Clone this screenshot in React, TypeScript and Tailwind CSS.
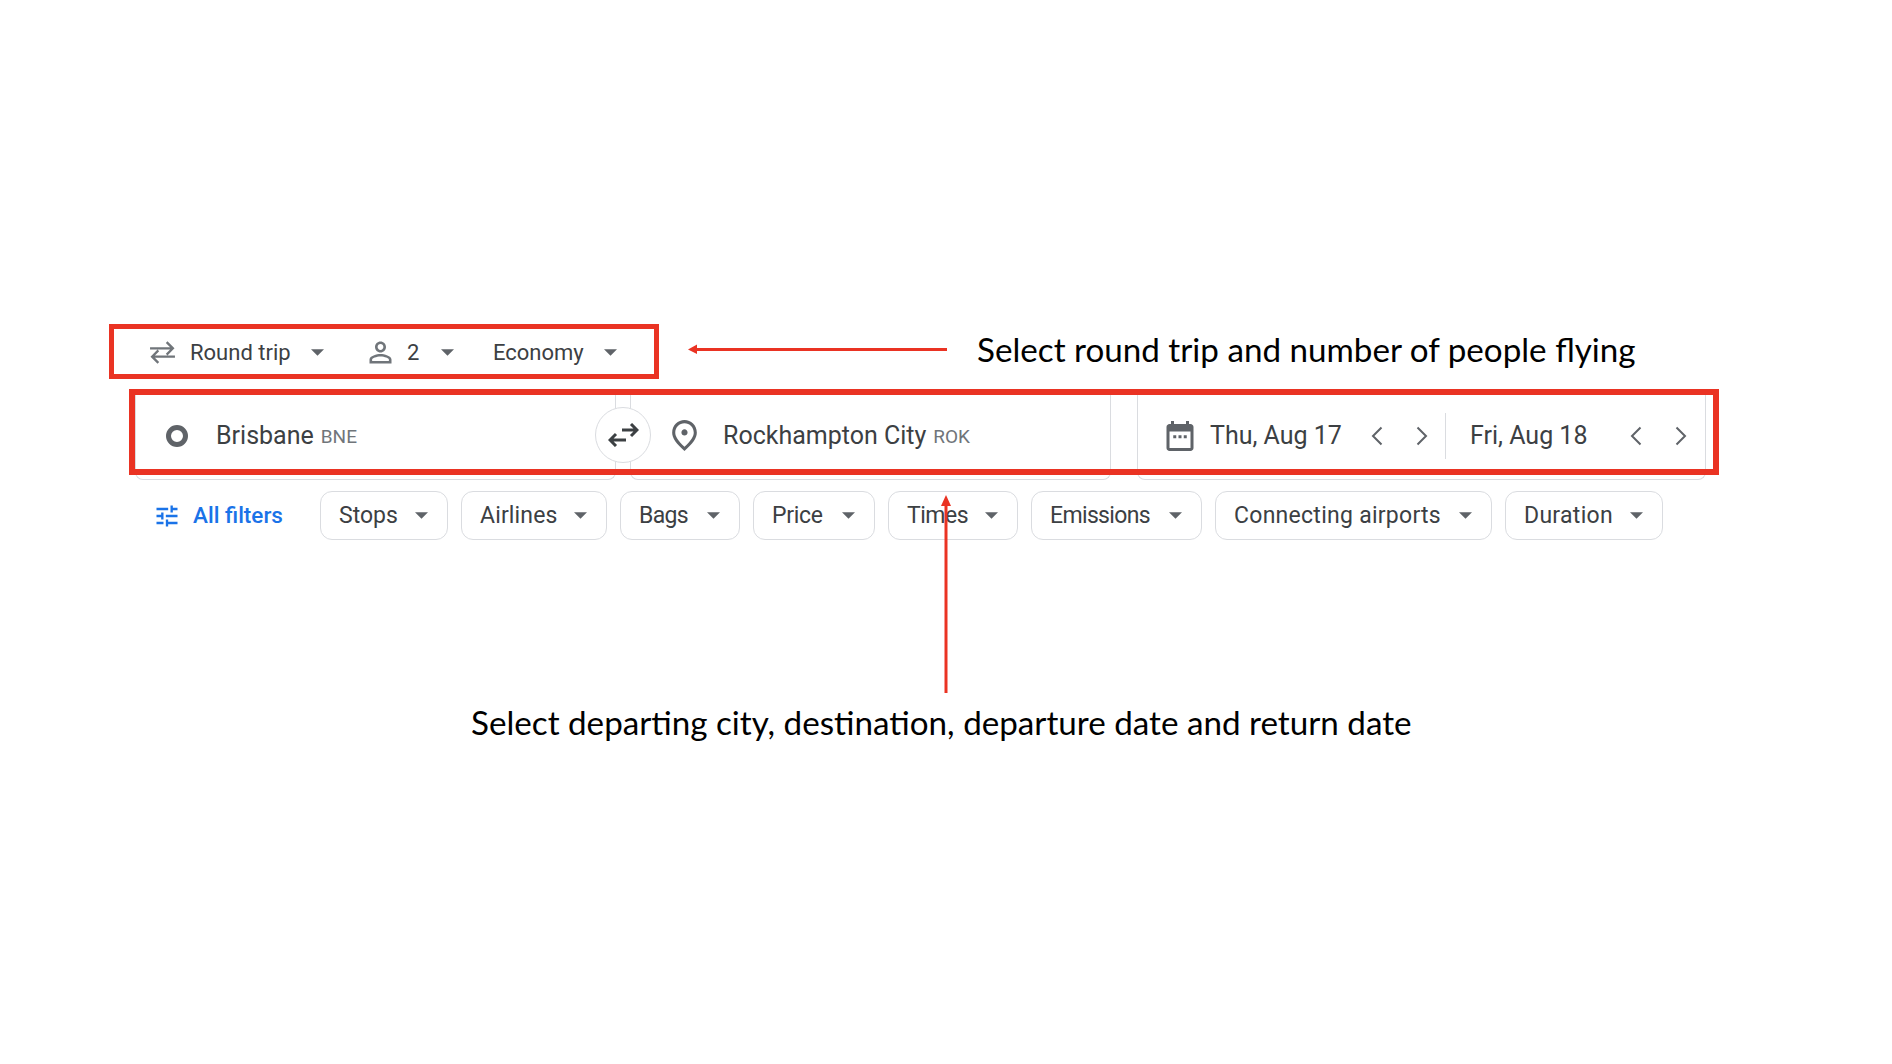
const chips = [
  { label: 'Stops', width: 'w-[128px]', tracking: '' },
  { label: 'Airlines', width: 'w-[146px]', tracking: 'tracking-[0.15px]' },
  { label: 'Bags', width: 'w-[120px]', tracking: 'tracking-[-0.7px]' },
  { label: 'Price', width: 'w-[122px]', tracking: 'tracking-[-0.3px]' },
  { label: 'Times', width: 'w-[130px]', tracking: 'tracking-[-0.5px]' },
  { label: 'Emissions', width: 'w-[171px]', tracking: 'tracking-[-0.65px]' },
  { label: 'Connecting airports', width: 'w-[277px]', tracking: 'tracking-[0.27px]' },
  { label: 'Duration', width: 'w-[158px]', tracking: 'tracking-[0.3px]' },
];

function Caret({ className = '' }: { className?: string }) {
  return (
    <svg viewBox="0 0 14 7" className={`w-[13px] h-[7px] shrink-0 ${className}`} fill="#5f6368">
      <path d="M0 0h14L7 7z" />
    </svg>
  );
}

function Chevron({ dir }: { dir: 'left' | 'right' }) {
  return (
    <svg viewBox="0 0 14 20" className="w-[14px] h-[20px] shrink-0" fill="none" stroke="#5f6368" strokeWidth="2">
      <path d={dir === 'left' ? 'M11.5 1.5 3 10l8.5 8.5' : 'M2.5 1.5 11 10l-8.5 8.5'} />
    </svg>
  );
}

function DateBox({ label, textWidth, className = '' }: { label: string; textWidth: string; className?: string }) {
  return (
    <div className={`flex items-center ${className}`}>
      <span className={`text-[25px] text-[#3c4043] ${textWidth}`}>{label}</span>
      <Chevron dir="left" />
      <span className="w-[31px]" />
      <Chevron dir="right" />
    </div>
  );
}

export default function App() {
  return (
    <div className="relative w-[1892px] h-[1064px] bg-white overflow-hidden font-['Roboto',sans-serif]">
      <div className="pt-[325px]">
        {/* Trip options */}
        <div className="flex items-center h-[54px] pl-[149px] text-[22px] text-[#3c4043]">
          <svg viewBox="0 0 26 24" className="w-[27px] h-[25px]" fill="none" stroke="#70757a" strokeWidth="2.2">
            <path d="M1 8h22M17 2l6 6-6 6M25 16H3M9 10l-6 6 6 6" />
          </svg>
          <span className="ml-[14px] w-[108px]">Round trip</span>
          <Caret className="ml-[13px]" />
          <svg viewBox="0 0 24 24" className="ml-[40px] w-[33px] h-[33px]" fill="#70757a">
            <path d="M12 5.9c1.16 0 2.1.94 2.1 2.1s-.94 2.1-2.1 2.1S9.9 9.16 9.9 8s.94-2.1 2.1-2.1m0 9c2.97 0 6.1 1.46 6.1 2.1v1.1H5.9V17c0-.64 3.13-2.1 6.1-2.1M12 4C9.79 4 8 5.79 8 8s1.79 4 4 4 4-1.79 4-4-1.79-4-4-4zm0 9c-2.67 0-8 1.34-8 4v3h16v-3c0-2.66-5.33-4-8-4z" />
          </svg>
          <span className="ml-[10px] w-[13px]">2</span>
          <Caret className="ml-[21px]" />
          <span className="ml-[39px] w-[95px]">Economy</span>
          <Caret className="ml-[16px]" />
          <p className="ml-[360px] mb-[5px] font-['Lato',sans-serif] text-[33.2px] text-black whitespace-nowrap">
            Select round trip and number of people flying
          </p>
        </div>

        {/* Search fields */}
        <div className="flex h-[88px] mt-[13px] ml-[135px] w-[1571px]">
          <div className="flex items-center w-[481px] border border-t-0 border-[#dadce0] rounded-b-lg pl-[30px]">
            <span className="w-[22px] h-[22px] rounded-full border-[5px] border-[#5f6368]" />
            <span className="ml-[28px] mt-[1px] text-[25px] text-[#3c4043]">Brisbane</span>
            <span className="ml-[7px] mt-[4px] text-[19px] text-[#70757a]">BNE</span>
          </div>
          <div className="flex items-center w-[481px] ml-[14px] border border-t-0 border-[#dadce0] rounded-b-lg pl-[35px]">
            <svg viewBox="0 0 24 24" className="w-[37px] h-[37px]" fill="#5f6368">
              <path d="M12 12c-1.1 0-2-.9-2-2s.9-2 2-2 2 .9 2 2-.9 2-2 2zm6-1.8C18 6.57 15.35 4 12 4s-6 2.57-6 6.2c0 2.34 1.95 5.44 6 9.14 4.05-3.7 6-6.8 6-9.14zM12 2c4.2 0 8 3.22 8 8.2 0 3.32-2.67 7.25-8 11.8-5.33-4.55-8-8.48-8-11.8C4 5.22 7.8 2 12 2z" />
            </svg>
            <span className="ml-[20px] mt-[1px] text-[25px] text-[#3c4043]">Rockhampton City</span>
            <span className="ml-[7px] mt-[4px] text-[19px] text-[#70757a]">ROK</span>
          </div>
          <div className="flex items-center flex-1 ml-[26px] border border-t-0 border-[#dadce0] rounded-b-lg pl-[24px]">
            <svg viewBox="0 0 24 24" className="w-[36px] h-[36px] shrink-0" fill="#5f6368">
              <path d="M19 4h-1V2h-2v2H8V2H6v2H5c-1.1 0-2 .9-2 2v14c0 1.1.9 2 2 2h14c1.1 0 2-.9 2-2V6c0-1.1-.9-2-2-2zm0 16H5V9h14v11z" />
              <path d="M7.5 11.5h2v2h-2zM11 11.5h2v2h-2zM14.5 11.5h2v2h-2z" />
            </svg>
            <DateBox label="Thu, Aug 17" textWidth="w-[160px] ml-[12px]" />
            <span className="w-px h-[46px] bg-[#dadce0] ml-[16px]" />
            <DateBox label="Fri, Aug 18" textWidth="w-[159px]" className="ml-[24px]" />
          </div>
        </div>

        {/* Filters */}
        <div className="flex items-center h-[49px] mt-[11px] ml-[153px] text-[23px] text-[#3c4043]">
          <svg viewBox="0 0 24 24" className="w-[28px] h-[28px] shrink-0" fill="#1a73e8">
            <path d="M3 17v2h6v-2H3zM3 5v2h10V5H3zm10 16v-2h8v-2h-8v-2h-2v6h2zM7 9v2H3v2h4v2h2V9H7zm14 4v-2H11v2h10zm-6-4h2V7h4V5h-4V3h-2v6z" />
          </svg>
          <span className="ml-[12px] w-[115px] text-[22.5px] font-medium text-[#1a73e8]">All filters</span>
          <div className="flex gap-[13px] ml-[12px]">
            {chips.map(chip => (
              <div key={chip.label} className={`flex items-center justify-between h-[49px] pl-[18px] pr-[19px] border border-[#dadce0] rounded-[12px] ${chip.width}`}>
                <span className={`mt-[1px] ${chip.tracking}`}>{chip.label}</span>
                <Caret />
              </div>
            ))}
          </div>
        </div>

        <p className="mt-[158px] pl-[471px] font-['Lato',sans-serif] text-[33.2px] text-black whitespace-nowrap">
          Select departing city, destination, departure date and return date
        </p>
      </div>

      {/* Swap button over the two fields */}
      <div className="absolute left-[595px] top-[407px] w-[56px] h-[56px] rounded-full bg-white border border-[#dadce0] flex items-center justify-center">
        <svg viewBox="0 0 31 24" className="w-[31px] h-[24px]" fill="none" stroke="#3c4043" strokeWidth="3">
          <path d="M14 7h15M23 1l6 6-6 6M18 17H2M8 11l-6 6 6 6" />
        </svg>
      </div>

      {/* Annotation boxes and arrows */}
      <div className="absolute left-[109px] top-[324px] w-[550px] h-[55px] border-[5px] border-[#ea3323]" />
      <div className="absolute left-[129px] top-[389px] w-[1590px] h-[86px] border-[6px] border-[#ea3323]" />
      <svg className="absolute left-[688px] top-[339px] w-[260px] h-[20px]" viewBox="0 0 260 20" fill="#ea3323">
        <path d="M9 9h250v3H9z" />
        <path d="M9 5.5V15L0 10.5z" />
      </svg>
      <svg className="absolute left-[936px] top-[495px] w-[20px] h-[201px]" viewBox="0 0 20 201" fill="#ea3323">
        <path d="M8.5 8h3v190h-3z" />
        <path d="M5 11h10L10 0z" />
      </svg>
    </div>
  );
}
